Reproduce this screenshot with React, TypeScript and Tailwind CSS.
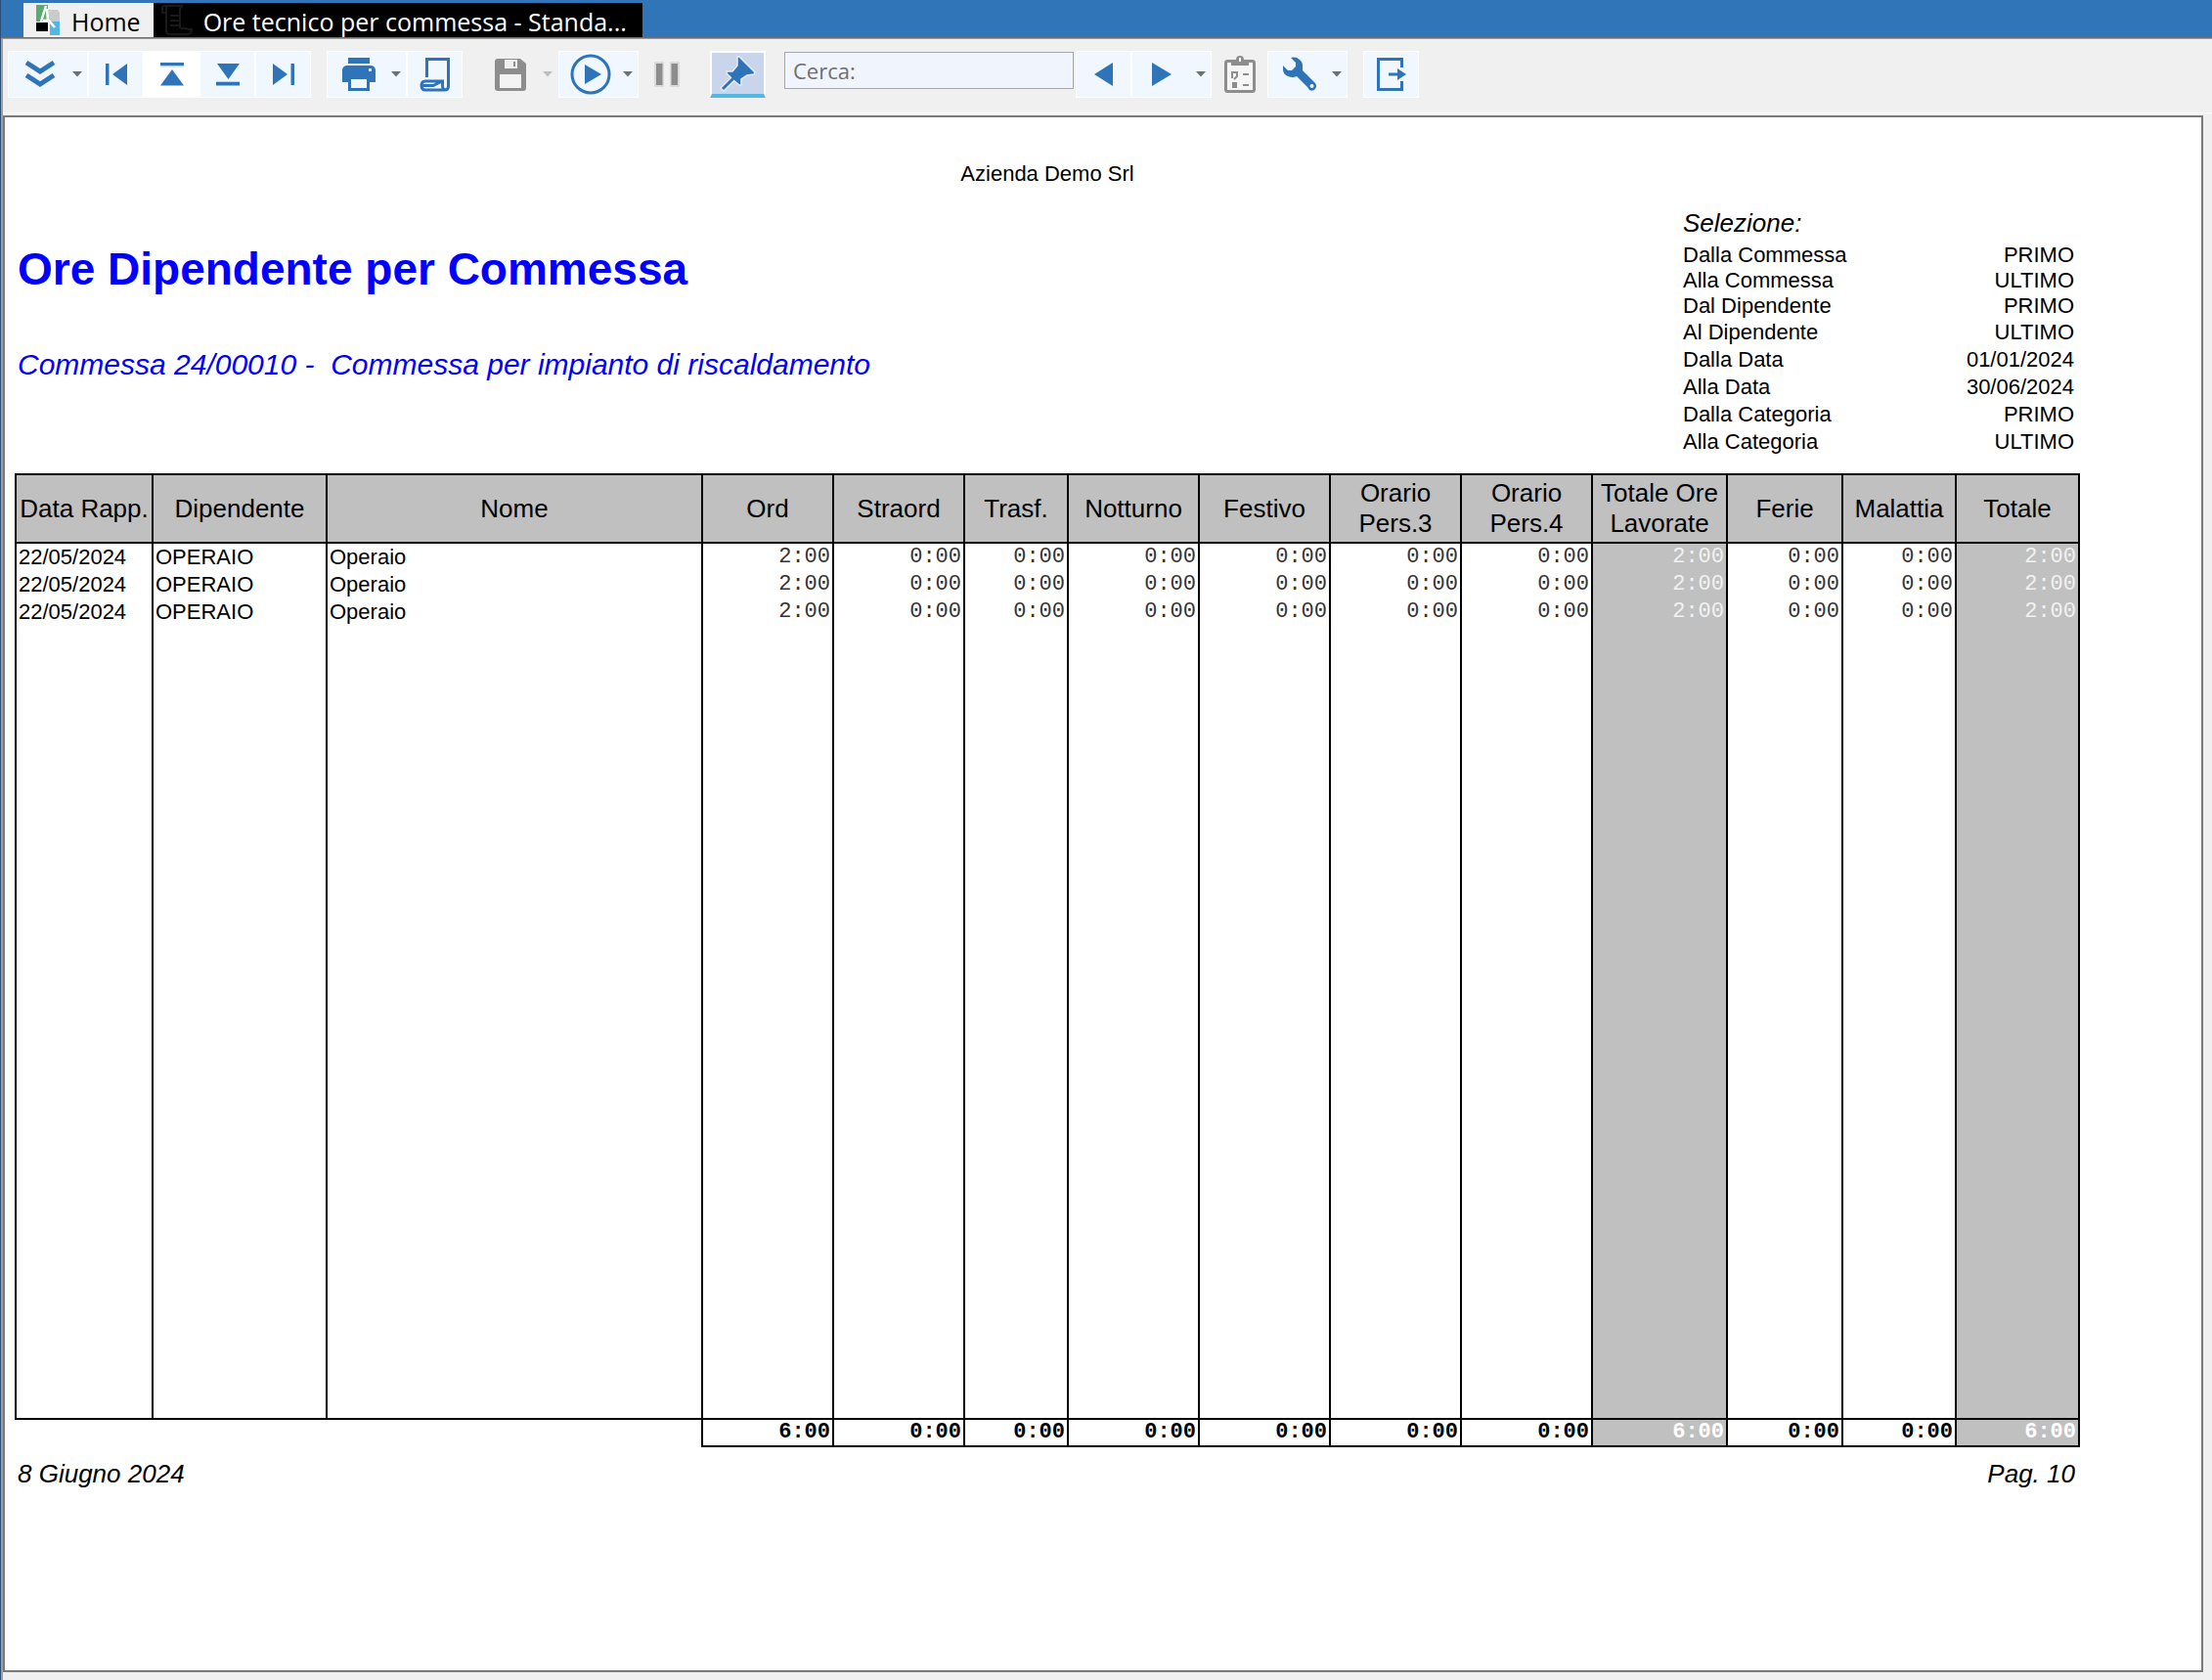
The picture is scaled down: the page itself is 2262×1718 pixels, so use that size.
import { useState } from 'react';
import type { ReactNode } from 'react';

const BLUE = '#2f74b9';

const selezione = [
  { label: 'Dalla Commessa', value: 'PRIMO', row: 'h-[26px]' },
  { label: 'Alla Commessa', value: 'ULTIMO', row: 'h-[26px]' },
  { label: 'Dal Dipendente', value: 'PRIMO', row: 'h-[26px]' },
  { label: 'Al Dipendente', value: 'ULTIMO', row: 'h-7' },
  { label: 'Dalla Data', value: '01/01/2024', row: 'h-7' },
  { label: 'Alla Data', value: '30/06/2024', row: 'h-7' },
  { label: 'Dalla Categoria', value: 'PRIMO', row: 'h-7' },
  { label: 'Alla Categoria', value: 'ULTIMO', row: 'h-7' },
];

const columns = [
  { title: 'Ord', width: 'w-[134px]' },
  { title: 'Straord', width: 'w-[134px]' },
  { title: 'Trasf.', width: 'w-[106px]' },
  { title: 'Notturno', width: 'w-[134px]' },
  { title: 'Festivo', width: 'w-[134px]' },
  { title: 'Orario Pers.3', width: 'w-[134px]' },
  { title: 'Orario Pers.4', width: 'w-[134px]' },
  { title: 'Totale Ore Lavorate', width: 'w-[138px]', total: true },
  { title: 'Ferie', width: 'w-[118px]' },
  { title: 'Malattia', width: 'w-[116px]' },
  { title: 'Totale', width: 'w-[126px]', total: true },
];

const ore = ['2:00', '0:00', '0:00', '0:00', '0:00', '0:00', '0:00', '2:00', '0:00', '0:00', '2:00'];
const rows = [1, 2, 3].map(id => ({ id, data: '22/05/2024', codice: 'OPERAIO', nome: 'Operaio', ore }));
const totali = ['6:00', '0:00', '0:00', '0:00', '0:00', '0:00', '0:00', '6:00', '0:00', '0:00', '6:00'];

const Caret = ({ color = '#6f6f6f' }: { color?: string }) => (
  <svg width="10" height="6" viewBox="0 0 10 6" className="ml-0.5"><path d="M0 0h10L5 5.5z" fill={color} /></svg>
);

type ToolProps = { label: string; children: ReactNode; split?: boolean; disabled?: boolean; hover?: boolean };

const Tool = ({ label, children, split, disabled, hover }: ToolProps) => (
  <button
    aria-label={label}
    title={label}
    disabled={disabled}
    className={`flex h-12 shrink-0 items-center border ${split ? 'w-[82px]' : 'w-[57px] justify-center'} ${disabled ? 'border-transparent' : hover ? 'border-white bg-white' : 'border-white bg-[#f0f7fe]'}`}
  >
    {split ? <span className="flex w-[63px] justify-center">{children}</span> : children}
    {split && <Caret color={disabled ? '#bdbdbd' : '#6f6f6f'} />}
  </button>
);

const Logo = () => (
  <svg width="25" height="32" viewBox="0 0 25 32">
    <path d="M0 0h12v17H0z" fill="#5cab6e" />
    <path d="M12 5h10l2 3v9H12z" fill="#c9cbcb" />
    <path d="M0 18h12v9H0z" fill="#000" />
    <path d="M13 17h11v14H13z" fill="#55b6e1" />
    <path d="M10 1L5 17M11 4l1 13M7 16h6l6 7" stroke="#fff" strokeWidth="2.500" fill="none" />
    <path d="M13 17v14" stroke="#f0f0f0" strokeWidth="2" />
  </svg>
);

const ReportIcon = () => (
  <svg width="32" height="32" viewBox="0 0 32 32" fill="none" stroke="#191919" strokeWidth="2">
    <path d="M5 8H1V3q0-2 3-2h18q-3 1-3 4v19M5 2v24q0 4 4 4h19q3-1 3-5h-3q0-1-8-1" />
    <path d="M9 11h9M9 16h9M9 21h9" />
  </svg>
);

const Toolbar = () => {
  const [search, setSearch] = useState('');
  return (
    <div className="flex items-start border-b border-white bg-[#f0f0f0] pb-[15px] pl-[5px] pt-[11px]">
      <Tool label="Espandi" split>
        <svg width="32" height="30" viewBox="0 0 32 30" fill="none" stroke={BLUE} strokeWidth="5">
          <path d="M2 3l14 9 14-9M2 16l14 9 14-9" />
        </svg>
      </Tool>
      <Tool label="Prima pagina">
        <svg width="24" height="24" viewBox="0 0 24 24" fill={BLUE}>
          <path d="M1 1h3v22H1zM23 1v22L8 12z" /><path d="M4 1h1v22H4z" opacity=".5" />
        </svg>
      </Tool>
      <Tool label="Inizio pagina" hover>
        <svg width="26" height="26" viewBox="0 0 26 26" fill={BLUE}>
          <path d="M1 1h24v3H1zM13 8l12 16.500H1z" /><path d="M1 4h24v1.500H1z" opacity=".3" />
        </svg>
      </Tool>
      <Tool label="Fine pagina">
        <svg width="26" height="26" viewBox="0 0 26 26" fill={BLUE}>
          <path d="M2 2h23L13.500 18zM1 21h24v3.500H1z" /><path d="M1 20h24v1H1z" opacity=".3" />
        </svg>
      </Tool>
      <Tool label="Ultima pagina">
        <svg width="24" height="24" viewBox="0 0 24 24" fill={BLUE}>
          <path d="M20 1h3v22h-3zM1 1v22l15-11z" /><path d="M19 1h1v22h-1z" opacity=".5" />
        </svg>
      </Tool>

      <div className="ml-4 flex">
        <Tool label="Stampa" split>
          <svg width="36" height="36" viewBox="0 0 36 36">
            <path d="M7 1h22v6H7z" fill={BLUE} />
            <path d="M5 9h26q4 1 4 5v12h-6v-6H7v6H1V14q0-4 4-5z" fill={BLUE} />
            <path d="M8.500 21.500h19v12h-19z" fill="#f0f7fe" stroke={BLUE} strokeWidth="3" />
            <path d="M28 12h3v3h-3z" fill="#d5e6f6" />
          </svg>
        </Tool>
        <Tool label="Anteprima">
          <svg width="32" height="36" viewBox="0 0 32 36" fill="none" stroke={BLUE} strokeWidth="3">
            <path d="M7.500 21V2.500h22V30q0 4-4 4H6q-4 0-4-4.500T6 25h17.500v4q0 5 3 5M3 29.500h11l8-4" />
          </svg>
        </Tool>
      </div>

      <div className="ml-4 flex">
        <Tool label="Salva" split disabled>
          <svg width="32" height="33" viewBox="0 0 32 33">
            <path d="M3 0h23l6 5v25q0 3-3 3H3q-3 0-3-3V3q0-3 3-3z" fill="#8d8d8d" />
            <path d="M10 1h13v9H10z" fill="#efefef" /><path d="M19 3h2v5h-2z" fill="#8d8d8d" />
            <path d="M5 16h22v14H5z" fill="#f3f3f3" />
          </svg>
        </Tool>
        <Tool label="Esegui" split>
          <svg width="42" height="42" viewBox="0 0 42 42">
            <circle cx="21" cy="21" r="19" fill="none" stroke={BLUE} strokeWidth="3" />
            <path d="M15 11v20l17-10z" fill={BLUE} />
          </svg>
        </Tool>
        <Tool label="Pausa" disabled>
          <svg width="26" height="26" viewBox="0 0 26 26">
            <path d="M0 0h10v26H0zM16 0h10v26H16z" fill="#dadada" />
            <path d="M2 2h6.500v22H2zM17.500 2H24v22h-6.500z" fill="#8d8d8d" />
          </svg>
        </Tool>
      </div>

      <button aria-label="Blocca" aria-pressed="true" className="ml-4 flex h-12 w-[57px] shrink-0 items-center justify-center border-2 border-b-4 border-white border-b-[#55b6e1] bg-[#c8d5eb]">
        <svg width="38" height="38" viewBox="0 0 38 38">
          <path d="M18 2L20 2L36 18L35 20L28 21L22 25L22 31L20 31L14 26L7 19L7 17L13 17L18 11Z" fill={BLUE} stroke="#e6ebf2" strokeWidth="1.500" />
          <path d="M13 25L2 36" stroke="#e6ebf2" strokeWidth="6" /><path d="M14 24L3 35" stroke={BLUE} strokeWidth="3" />
        </svg>
      </button>

      <input
        aria-label="Cerca"
        placeholder="Cerca:"
        value={search}
        onChange={e => setSearch(e.target.value)}
        className="ml-[19px] mr-0.5 mt-px h-[38px] w-[296px] border border-[#a5a7ab] bg-[#f0f5fd] px-2 font-['Open_Sans',sans-serif] text-[22px] text-[#6f6f6f] outline-none placeholder:text-[#6f6f6f]"
      />
      <Tool label="Cerca precedente">
        <svg width="20" height="24" viewBox="0 0 20 24" fill={BLUE}><path d="M19 0v24L0 12z" /></svg>
      </Tool>
      <Tool label="Cerca successivo" split>
        <svg width="24" height="24" viewBox="0 0 24 24" fill={BLUE}><path d="M0 0v24l20-12z" /></svg>
      </Tool>
      <Tool label="Appunti" disabled>
        <svg width="32" height="40" viewBox="0 0 32 40" fill="none" stroke="#8d8d8d">
          <path d="M3.500 6.500h25q2 0 2 2v27q0 2-2 2h-25q-2 0-2-2v-27q0-2 2-2z" fill="#f6f6f6" strokeWidth="3" />
          <path d="M7 5h5q0-4 4-4t4 4h5v6H7z" fill="#8d8d8d" stroke="none" /><path d="M15 3h2v4h-2z" fill="#f6f6f6" stroke="none" />
          <path d="M8 24v-6h5v4l-3 3M19 20h6M19 31h6" strokeWidth="2" /><path d="M8 28h5v6H8z" fill="#8d8d8d" stroke="none" />
        </svg>
      </Tool>
      <Tool label="Strumenti" split>
        <svg width="36" height="36" viewBox="0 0 36 36">
          <path d="M9 1Q12 0 15 1Q21 4 21 9L21 14L34 27Q36 30 34 33Q31 36 28 34L26 31L15 20Q11 22 6 20Q1 18 1 13L1 9L6 14L10 14L14 10L14 6Z" fill={BLUE} />
          <circle cx="30.500" cy="30" r="2" fill="#f0f7fe" />
        </svg>
      </Tool>
      <div className="ml-4 flex">
        <Tool label="Esci">
          <svg width="32" height="36" viewBox="0 0 32 36" fill="none" stroke={BLUE} strokeWidth="3">
            <path d="M26.500 11V2.500h-24v31h24V25M13 18h11" /><path d="M22 12l9 6-9 6z" fill={BLUE} stroke="none" />
          </svg>
        </Tool>
      </div>
    </div>
  );
};

const ReportTable = () => (
  <table className="mt-[19px] w-full table-fixed border-collapse">
    <colgroup>
      <col className="w-[140px]" />
      <col className="w-[178px]" />
      <col />
      {columns.map(c => <col key={c.title} className={c.width} />)}
    </colgroup>
    <thead>
      <tr className="h-[70px] bg-[#c0c0c0] text-[26px] leading-[31px]">
        {['Data Rapp.', 'Dipendente', 'Nome'].map(h => <th key={h} className="whitespace-nowrap border-2 border-black p-0 font-normal">{h}</th>)}
        {columns.map(c => <th key={c.title} className="border-2 border-black px-1 py-0 font-normal">{c.title}</th>)}
      </tr>
    </thead>
    <tbody className="border-2 border-black">
      {rows.map(r => (
        <tr key={r.id} className="text-[22px] leading-7">
          <td className="border-x-2 border-black px-0.5 py-0">{r.data}</td>
          <td className="border-x-2 border-black px-0.5 py-0">{r.codice}</td>
          <td className="border-x-2 border-black px-0.5 py-0">{r.nome}</td>
          {r.ore.map((v, i) => (
            <td key={i} className={`border-x-2 border-black px-0.5 py-0 text-right font-['Liberation_Mono',monospace] ${columns[i].total ? 'bg-[#c0c0c0] text-[#f2f2f2]' : 'text-[#333333]'}`}>{v}</td>
          ))}
        </tr>
      ))}
      <tr className="h-[811px]">
        {[0, 1, 2].map(i => <td key={i} className="border-x-2 border-black" />)}
        {columns.map(c => <td key={c.title} className={`border-x-2 border-black ${c.total ? 'bg-[#c0c0c0]' : ''}`} />)}
      </tr>
    </tbody>
    <tfoot>
      <tr className="h-7 text-[22px] leading-[26px]">
        <td colSpan={3} />
        {totali.map((v, i) => (
          <td key={i} className={`border-2 border-black px-0.5 py-0 text-right align-top font-['Liberation_Mono',monospace] font-bold ${columns[i].total ? 'bg-[#c0c0c0] text-white' : ''}`}>{v}</td>
        ))}
      </tr>
    </tfoot>
  </table>
);

function App() {
  return (
    <div className="flex min-h-screen flex-col border-l border-[#2c4f78] bg-[#f0f0f0] font-['Liberation_Sans',Arial,sans-serif] text-black">
      <nav className="flex items-end border-b border-[#6d6d6d] bg-[#3175b9] pl-[23px] pt-[3px] font-['Open_Sans',sans-serif] text-[25px] leading-[31px]">
        <a href="#home" className="flex h-[35px] items-center gap-[11px] bg-[#f0f0f0] pl-[13px] pr-[13px]"><Logo /><span className="pt-1">Home</span></a>
        <a href="#report" className="flex h-[35px] items-center gap-[11px] bg-black pl-2 pr-4 text-white"><ReportIcon /><span className="pt-1">Ore tecnico per commessa - Standa...</span></a>
      </nav>
      <div className="flex grow flex-col border-l-2 border-t border-[#a0a0a0] border-t-[#9a9a9a] pt-px">
        <Toolbar />
        <main className="mr-[9px] mt-0.5 mb-2 flex grow flex-col border-2 border-[#7a7a7a] bg-white pb-10 pl-[10px] pr-[124px]">
          <p className="pt-11 text-center text-[22px] leading-7">Azienda Demo Srl</p>
          <header className="mt-5 flex justify-between">
            <div className="pl-[3px] pt-[35px] text-[#0000ff]">
              <h1 className="text-[46px] font-bold leading-[56px]">Ore Dipendente per Commessa</h1>
              <h2 className="mt-[52px] whitespace-pre text-[30px] italic leading-9">Commessa 24/00010 -  Commessa per impianto di riscaldamento</h2>
            </div>
            <section className="w-[406px] pr-1.5">
              <h3 className="text-[26px] italic leading-8">Selezione:</h3>
              <dl className="mt-[3px] text-[22px]">
                {selezione.map(s => (
                  <div key={s.label} className={`flex items-center justify-between ${s.row}`}><dt>{s.label}</dt><dd>{s.value}</dd></div>
                ))}
              </dl>
            </section>
          </header>
          <ReportTable />
          <footer className="mt-[11px] flex justify-between pl-[3px] pr-[5px] text-[26px] italic leading-8">
            <span>8 Giugno 2024</span>
            <span>Pag. 10</span>
          </footer>
        </main>
      </div>
    </div>
  );
}

export default App;
